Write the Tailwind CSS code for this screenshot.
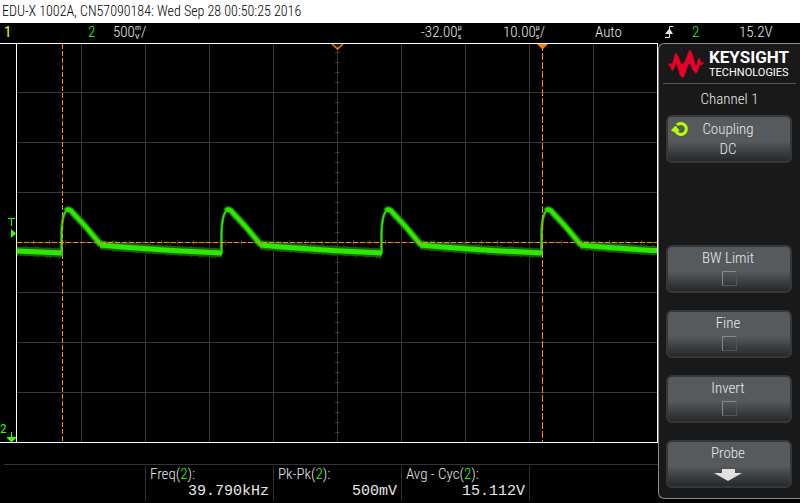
<!DOCTYPE html>
<html lang="en">
<head>
<meta charset="utf-8">
<meta name="viewport" content="width=device-width, initial-scale=1">
<title>EDU-X 1002A</title>
<script src="https://cdn.jsdelivr.net/npm/@tailwindcss/browser@4"></script>
</head>
<body class="flex min-h-screen flex-col bg-black font-['Roboto_Condensed',Roboto,sans-serif] text-[15px] leading-5 font-light text-[#e8e8e8]">
<header class="h-[23px] bg-white px-[2px] text-sm leading-[23px] font-light whitespace-nowrap text-black">EDU-X 1002A, CN57090184: Wed Sep 28 00:50:25 2016</header>

<div class="flex h-5 items-center pb-[3px] whitespace-nowrap">
  <span class="w-[88px] pl-1 font-normal text-[#ffff00]">1</span>
  <span class="w-[25px] text-[#33ff00]">2</span>
  <span class="flex flex-1 items-center">500<span class="flex flex-col text-[8px] leading-[9px] font-normal"><span>m</span><span>V</span></span>/</span>
  <span class="flex w-[82px] items-center">-32.00<span class="flex flex-col text-[8px] leading-[9px] font-normal"><span>µ</span><span>s</span></span></span>
  <span class="flex w-[92px] items-center">10.00<span class="flex flex-col text-[8px] leading-[9px] font-normal"><span>µ</span><span>s</span></span>/</span>
  <span class="w-[70px]">Auto</span>
  <svg class="mr-[19px] h-3 w-2" viewBox="0 0 8 12" fill="none" stroke="#e8e8e8" aria-label="Rising edge"><path d="M8 .5H4.500V11.500H0"/><path d="M0 8L4 3H5L8 8Z" fill="#e8e8e8" stroke="none"/></svg>
  <span class="w-[47px] text-[#33ff00]">2</span>
  <span class="w-[61px]">15.2V</span>
</div>

<main class="flex flex-1">
  <div class="flex min-w-0 flex-1 flex-col">
    <section class="flex flex-1 border-y border-white" aria-label="Waveform">
      <div class="relative w-4 shrink-0 text-[#33ff00]">
        <svg class="absolute top-[174px] left-2 h-5 w-2" viewBox="0 0 8 20"><path d="M0 .5H7M3.500 0V8" fill="none" stroke="#33ff00"/><path d="M3 11L8 15.500L3 20Z" fill="#33ff00"/></svg>
        <span class="absolute bottom-[5px] left-0 text-[13px] leading-4 font-normal">2</span>
        <svg class="absolute bottom-0 left-[7px] h-[10px] w-[9px]" viewBox="0 0 9 10" fill="#33ff00"><path d="M4 0H5V5H9V6L5 10H4L0 6V5H4Z"/></svg>
      </div>
      <div class="relative min-w-0 flex-1 border-x border-white">
        <svg class="absolute inset-0 h-full w-full" viewBox="0 0 640 398" preserveAspectRatio="none" fill="none">
          <g id="grid" stroke="#383838" shape-rendering="crispEdges"></g>
          <g id="trace"></g>
          <g stroke="#ff8c00" shape-rendering="crispEdges">
            <path d="M0 198.500H640" stroke-dasharray="5 2"/>
            <path d="M45.500 0V398" stroke-dasharray="5 2"/>
            <path d="M525.500 0V398" stroke-dasharray="7 2"/>
          </g>
          <path d="M315 0L320.500 5L326 0" stroke="#ff8000" stroke-width="1.500"/>
          <path d="M520 0H531L526 5H525Z" fill="#ff8000"/>
        </svg>
      </div>
    </section>
    <section class="mt-[21px] ml-1 h-[39px] border-t border-[#333336] pt-px" aria-label="Measurements">
      <dl class="ml-[141px] flex h-[35px] w-[385px] border-r border-[#333336]">
        <div class="flex w-[128px] flex-col border-l border-[#333336] px-1"><dt class="h-[17px] leading-4">Freq(<span class="text-[#33ff00]">2</span>):</dt><dd class="text-right font-['Liberation_Mono',monospace] text-[15px] leading-[17px]">39.790kHz</dd></div>
        <div class="flex w-[128px] flex-col border-l border-[#333336] px-1"><dt class="h-[17px] leading-4">Pk-Pk(<span class="text-[#33ff00]">2</span>):</dt><dd class="text-right font-['Liberation_Mono',monospace] text-[15px] leading-[17px]">500mV</dd></div>
        <div class="flex w-[128px] flex-col border-l border-[#333336] px-1"><dt class="h-[17px] leading-4">Avg - Cyc(<span class="text-[#33ff00]">2</span>):</dt><dd class="text-right font-['Liberation_Mono',monospace] text-[15px] leading-[17px]">15.112V</dd></div>
      </dl>
    </section>
  </div>

  <aside class="mb-1 flex w-[142px] shrink-0 flex-col rounded-l-md border-y border-l border-[#888] bg-[#191919] px-[7px] pb-[10px]">
    <div class="-mx-[3px] flex h-10 items-center gap-[5px] border-b border-[#555] pl-[5px]">
      <svg class="h-7 w-9 shrink-0" viewBox="0 0 36 28" fill="#e90029" stroke="#e90029" stroke-linejoin="round"><path d="M.5 14.500L3 13.500L4.500 15L7.500 3.500L9 4.500L13 14L14.500 15L17 12L21.500 .5H22.500L25 7L27 15L28.500 16L31 8L33 13H35.500L33 15L31.500 14.500L29 22L27.500 23L24.500 19L22.500 13L20 14L16 26L14 27.500L12 24L9 13.500L7.500 14L5 20H4L2.500 16Z"/></svg>
      <div class="font-[Roboto,sans-serif] whitespace-nowrap text-white"><div class="text-[17px] leading-[17px] font-bold">KEYSIGHT</div><div class="text-[11px] leading-[13px] font-normal">TECHNOLOGIES</div></div>
    </div>
    <h1 class="h-[31px] pt-[5px] text-center">Channel 1</h1>
    <button class="relative mb-[82px] h-12 w-[126px] rounded-md border-2 border-[#34383a] bg-linear-to-b from-[#575a5c] from-55% to-[#25292b] pr-[2px] text-center leading-5 font-light"><svg class="absolute top-1 left-[3px] h-4 w-[18px]" viewBox="0 0 18 16" fill="none"><path d="M6 4A5.500 5.500 0 1 1 5 10.500" stroke="#b4ff00" stroke-width="3"/><path d="M0 9.500L4 5H5L8.500 9.500L6.500 11H3Z" fill="#b4ff00"/></svg><span class="block">Coupling</span><span class="block">DC</span></button>
    <label class="mb-[17px] flex h-12 w-[126px] flex-col items-center rounded-md border-2 border-[#34383a] bg-linear-to-b from-[#575a5c] from-55% to-[#25292b]"><span class="h-6 pr-[2px] leading-[22px]">BW Limit</span><input type="checkbox" class="size-[15px] appearance-none border border-t-[#888] border-r-[#555] border-b-[#555] border-l-[#888]"></label>
    <label class="mb-[17px] flex h-12 w-[126px] flex-col items-center rounded-md border-2 border-[#34383a] bg-linear-to-b from-[#575a5c] from-55% to-[#25292b]"><span class="h-6 pr-[2px] leading-[22px]">Fine</span><input type="checkbox" class="size-[15px] appearance-none border border-t-[#888] border-r-[#555] border-b-[#555] border-l-[#888]"></label>
    <label class="mb-[17px] flex h-12 w-[126px] flex-col items-center rounded-md border-2 border-[#34383a] bg-linear-to-b from-[#575a5c] from-55% to-[#25292b]"><span class="h-6 pr-[2px] leading-[22px]">Invert</span><input type="checkbox" class="size-[15px] appearance-none border border-t-[#888] border-r-[#555] border-b-[#555] border-l-[#888]"></label>
    <button class="flex h-12 w-[126px] flex-col items-center rounded-md border-2 border-[#34383a] bg-linear-to-b from-[#575a5c] from-55% to-[#25292b] pr-[2px] font-light"><span class="h-[27px] leading-[22px]">Probe</span><svg class="h-3 w-7" viewBox="0 0 28 12" fill="#e0e0e0"><path d="M8 0H21V4H28L14 12L0 4H8Z"/></svg></button>
  </aside>
</main>
<script>
// Graticule: 10 x 8 divisions with ticks on the centre axes
let d = '';
for (let x = 64.5; x < 640; x += 64) d += `M${x} 0V398`;
for (let y = 48.5; y < 398; y += 50) d += `M0 ${y}H640`;
for (let x = 16.5; x < 640; x += 16) d += `M${x} 196V201`;
for (let y = 8.5; y < 398; y += 10) d += `M318 ${y}H323`;
document.getElementById('grid').innerHTML = `<path d="${d}"/>`;

// Channel 2 trace: fast rise, ramp down, slow decay, repeated every 160 units
const starts = [45, 205, 365, 525];
const each = f => starts.map(f).join('');
const body = 'M0 207L45 209' + each(s => `M${s + 38} 201L${s + 60} 203L${s + 110} 206.5L${Math.min(s + 160, 640)} ${s > 500 ? 206.5 : 209}`);
const edge = each(s => `M${s - 0.5} 210V188C${s} 178 ${s + 1} 170 ${s + 4} 167`);
const ramp = each(s => `M${s + 4} 167Q${s + 7} 163.5 ${s + 11} 169L${s + 24} 183L${s + 39} 201`);
let noise = '';
for (let x = 0; x < 640; x += 3) {
  const t = ((x - 45) % 160 + 160) % 160;
  if (t > 42 && (x * 7919) % 11 < 5) {
    const y = 201 + (t - 40) * 0.068;
    noise += `M${x} ${y - 5}V${y + 6}`;
  }
}
document.getElementById('trace').innerHTML =
  `<path d="${noise}" stroke="#123c04" stroke-width="2"/>` +
  `<path d="${body}" stroke="#176406" stroke-width="9"/>` +
  `<path d="${edge}" stroke="#1a7c06" stroke-width="3"/>` +
  `<path d="${ramp}" stroke="#1b7d06" stroke-width="7"/>` +
  `<path d="${body}" stroke="#2ee800" stroke-width="5"/>` +
  `<path d="${edge}" stroke="#2ee800" stroke-width="1.5"/>` +
  `<path d="${ramp}" stroke="#2ee800" stroke-width="4"/>`;
</script>
</body>
</html>
